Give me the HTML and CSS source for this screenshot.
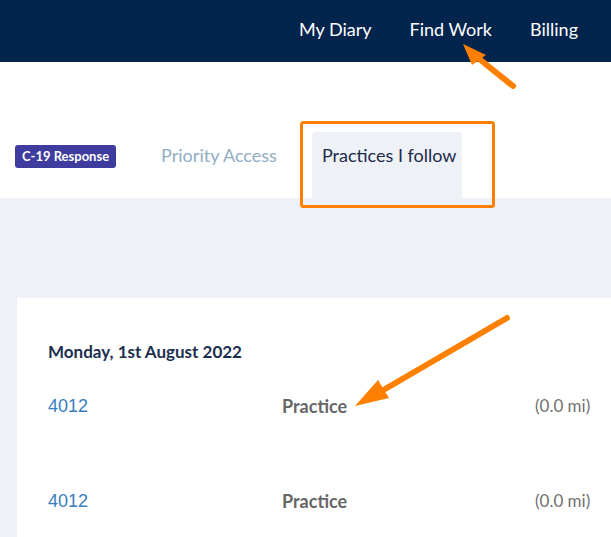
FILE: index.html
```html
<!DOCTYPE html>
<html lang="en">
<head>
  <meta charset="UTF-8">
  <title>Practices I follow</title>
  <link rel="stylesheet" href="styles.css">
</head>
<body>
  <div class="topbar">
    <nav class="topnav">
      <a href="#">My Diary</a>
      <a href="#">Find Work</a>
      <a href="#">Billing</a>
    </nav>
  </div>

  <div class="tabs">
    <span class="badge">C-19 Response</span>
    <a class="tab" href="#">Priority Access</a>
    <a class="tab active" href="#">Practices I follow</a>
  </div>

  <div class="content">
    <div class="card">
      <h3 class="day-title">Monday, 1st August 2022</h3>
      <div class="job-row">
        <a class="job-id" href="#">4012</a>
        <span class="job-name">Practice</span>
        <span class="job-dist">(0.0 mi)</span>
      </div>
      <div class="job-row">
        <a class="job-id" href="#">4012</a>
        <span class="job-name">Practice</span>
        <span class="job-dist">(0.0 mi)</span>
      </div>
    </div>
  </div>

  <!-- annotation overlay -->
  <svg class="marks" width="611" height="537" viewBox="0 0 611 537">
    <rect x="301.5" y="122.5" width="192" height="84" rx="2" fill="none" stroke="#ff8000" stroke-width="3"/>
    <line x1="513" y1="86" x2="478" y2="58" stroke="#ff8000" stroke-width="6" stroke-linecap="round"/>
    <polygon points="463,44 486,55 472,65" fill="#ff8000"/>
    <line x1="507" y1="318" x2="380" y2="392" stroke="#ff8000" stroke-width="6" stroke-linecap="round"/>
    <polygon points="355,406 378,380 389,398" fill="#ff8000"/>
  </svg>
</body>
</html>
```

FILE: styles.css
```css
body {
  margin: 0;
  font-family: Lato, "Open Sans", sans-serif;
  background: #eef1f6;
  position: relative;
  height: 537px;
  overflow: hidden;
}
a {
  text-decoration: none;
}
.topbar {
  background: #03244d;
  height: 62px;
  display: flex;
  justify-content: flex-end;
  align-items: center;
}
.topnav {
  display: flex;
  gap: 38px;
  padding-right: 33px;
  padding-bottom: 5px;
}
.topnav a {
  color: #fff;
  font-size: 18px;
}
.tabs {
  background: #fff;
  height: 136px;
  box-sizing: border-box;
  padding: 70px 0 0 15px;
  display: flex;
  align-items: flex-start;
}
.badge {
  background: #3e3c9e;
  color: #fff;
  font-size: 13px;
  font-weight: bold;
  padding: 4px 7px;
  border-radius: 3px;
  margin-top: 13px;
  line-height: 15px;
}
.tab {
  font-size: 18px;
  color: #8fadc4;
  padding: 12px 10px;
  line-height: 22px;
  margin-left: 35px;
  white-space: nowrap;
}
.tab.active {
  margin-left: 25px;
  background: #eef1f6;
  color: #1c2b4a;
  height: 66px;
  box-sizing: border-box;
  width: 150px;
  border-radius: 4px 4px 0 0;
}
.content {
  padding: 100px 0 0 17px;
}
.card {
  background: #fff;
  padding: 44px 0 0 31px;
  height: 239px;
  box-sizing: border-box;
}
.day-title {
  margin: 0;
  font-size: 17px;
  font-weight: bold;
  color: #1c2f4f;
  line-height: 20px;
}
.job-row {
  display: grid;
  grid-template-columns: 234px 253px auto;
  align-items: center;
  height: 20px;
  line-height: 20px;
  margin-top: 34px;
  font-size: 17px;
}
.job-row + .job-row {
  margin-top: 75px;
}
.job-id {
  font-family: "Liberation Sans", Arial, sans-serif;
  font-size: 18px;
  color: #3a7dbf;
}
.job-name {
  font-size: 18px;
  font-weight: bold;
  color: #666;
}
.job-dist {
  color: #717171;
}
.marks {
  position: absolute;
  left: 0;
  top: 0;
  pointer-events: none;
}
```
